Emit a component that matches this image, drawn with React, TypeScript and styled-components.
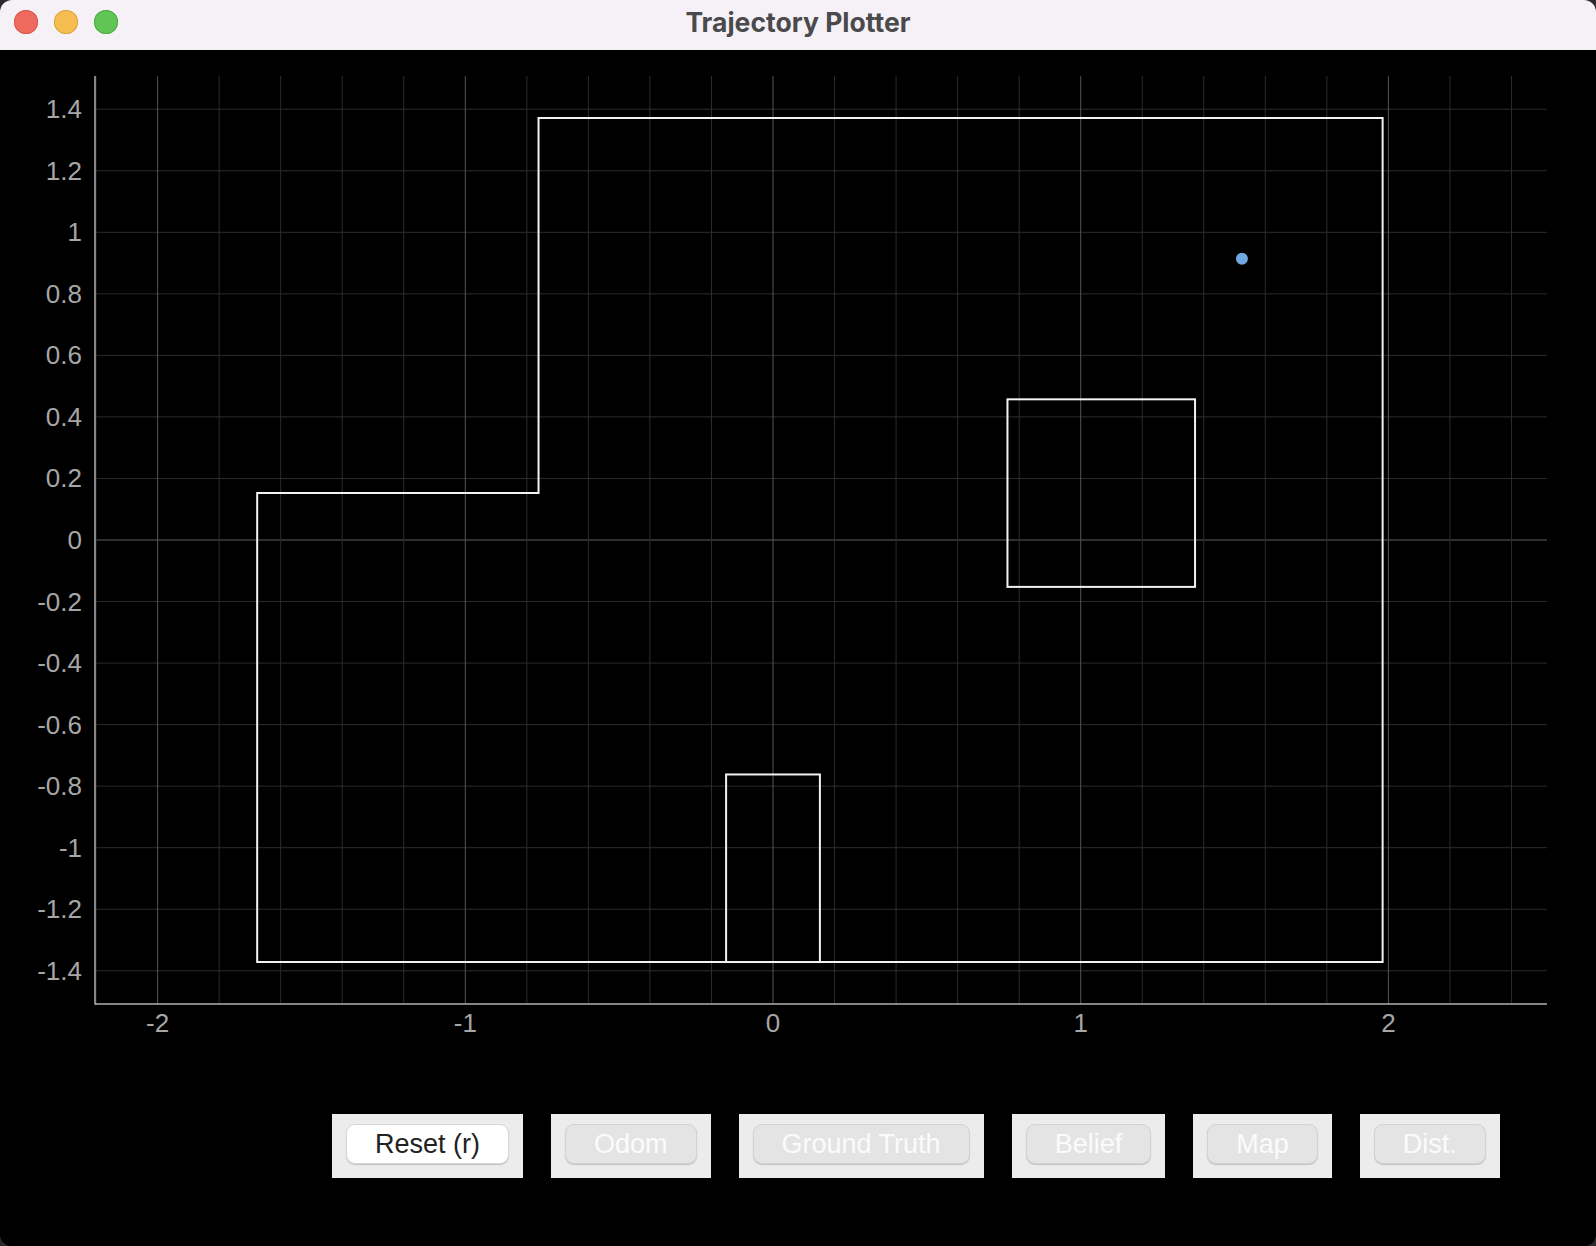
import React from "react";
import styled, { createGlobalStyle } from "styled-components";

const GlobalStyle = createGlobalStyle`
  html, body { margin: 0; padding: 0; background: #2b2b2b; }
  #root { width: 1596px; height: 1246px; }
`;

const Window = styled.div`
  width: 1596px;
  height: 1246px;
  display: flex;
  flex-direction: column;
  border-radius: 12px;
  overflow: hidden;
  background: #000;
`;

const TitleBar = styled.div`
  height: 50px;
  flex: 0 0 50px;
  box-sizing: border-box;
  padding-bottom: 7px;
  background: #f6f1f7;
  display: grid;
  grid-template-columns: 1fr auto 1fr;
  align-items: center;
`;

const Lights = styled.div`
  display: flex;
  gap: 16px;
  padding-left: 14px;
`;

const Light = styled.span<{ $fill: string; $edge: string }>`
  width: 24px;
  height: 24px;
  border-radius: 50%;
  background: ${(p) => p.$fill};
  box-shadow: inset 0 0 0 1px ${(p) => p.$edge};
`;

const Title = styled.div`
  font-family: Inter, "Noto Sans", sans-serif;
  font-weight: 700;
  font-size: 26.5px;
  line-height: 30px;
  color: #4a4a4c;
`;

const Content = styled.div`
  flex: 1;
  background: #000;
  display: flex;
  flex-direction: column;
`;

const Plot = styled.svg`
  display: block;
  width: 1596px;
  height: 1040px;
`;

const ButtonBar = styled.div`
  display: flex;
  gap: 28px;
  padding-left: 332px;
  margin-top: 24px;
`;

const Cell = styled.div`
  background: #ececec;
  padding: 10px 14px 14px;
  height: 64px;
  box-sizing: border-box;
`;

const Button = styled.button<{ $enabled?: boolean }>`
  height: 40px;
  box-sizing: border-box;
  padding: 0 28px;
  border-radius: 9px;
  font-family: "Liberation Sans", Arial, sans-serif;
  font-size: 27px;
  line-height: 38px;
  border: 1px solid ${(p) => (p.$enabled ? "#d6d6d6" : "#d2d2d2")};
  background: ${(p) => (p.$enabled ? "#ffffff" : "#e4e4e4")};
  color: ${(p) => (p.$enabled ? "#222222" : "#fbfbfb")};
  box-shadow: 0 1px 1px rgba(0, 0, 0, 0.18);
  cursor: default;
`;

const S = 307.7;
const X0 = 773;
const Y0 = 540 - 50; // svg starts at page y = 50
const X = (v: number) => X0 + v * S;
const Y = (v: number) => Y0 - v * S;

const LEFT = 95;
const RIGHT = 1547;
const TOP = 76 - 50;
const BOTTOM = 1004 - 50;

const round = (v: number) => Math.round(v * 10) / 10;
const fmt = (v: number) => {
  const r = round(v);
  if (Math.abs(r) < 1e-9) return "0";
  return String(r);
};

const xMinor: number[] = [];
for (let k = -11; k <= 12; k++) xMinor.push(k * 0.2);
const yMinor: number[] = [];
for (let k = -7; k <= 7; k++) yMinor.push(k * 0.2);
const xMajor = [-2, -1, 0, 1, 2];

const ft = 0.3048;
const outer = [
  [-2.5, 4.5],
  [6.5, 4.5],
  [6.5, -4.5],
  [-5.5, -4.5],
  [-5.5, 0.5],
  [-2.5, 0.5],
].map(([a, b]) => [a * ft, b * ft]);

const boxes = [
  [2.5, -0.5, 4.5, 1.5],
  [-0.5, -4.5, 0.5, -2.5],
].map((b) => b.map((v) => v * ft));

const buttons = [
  { label: "Reset (r)", enabled: true },
  { label: "Odom" },
  { label: "Ground Truth" },
  { label: "Belief" },
  { label: "Map" },
  { label: "Dist." },
];

const labelFont = "'Liberation Sans', Arial, sans-serif";

export default function App() {
  return (
    <>
      <GlobalStyle />
      <Window>
        <TitleBar>
          <Lights>
            <Light $fill="#ef6a5e" $edge="#d8574c" />
            <Light $fill="#f6be50" $edge="#dca23c" />
            <Light $fill="#61c555" $edge="#4faa43" />
          </Lights>
          <Title>Trajectory Plotter</Title>
          <div />
        </TitleBar>
        <Content>
          <Plot viewBox="0 0 1596 1040">
            {yMinor.map((v) => {
              const isMajor = Math.abs(v) < 1e-9;
              return (
                <line
                  key={"h" + v}
                  x1={LEFT}
                  x2={RIGHT}
                  y1={Y(v)}
                  y2={Y(v)}
                  stroke={isMajor ? "#5e5e5e" : "#2c2c2c"}
                  strokeWidth={1}
                />
              );
            })}
            {xMinor.map((v) => {
              const r = round(v);
              const isMajor = Math.abs(r - Math.round(r)) < 1e-9;
              const x = X(v);
              if (x <= LEFT + 1 || x > RIGHT) return null;
              return (
                <line
                  key={"v" + v}
                  x1={x}
                  x2={x}
                  y1={TOP}
                  y2={BOTTOM}
                  stroke={isMajor ? "#545454" : "#2c2c2c"}
                  strokeWidth={1}
                />
              );
            })}
            <line x1={LEFT} x2={LEFT} y1={TOP} y2={BOTTOM + 0.5} stroke="#b0b0b0" strokeWidth={1.5} />
            <line x1={LEFT} x2={RIGHT} y1={BOTTOM} y2={BOTTOM} stroke="#b0b0b0" strokeWidth={1.5} />

            {yMinor.map((v) => (
              <text
                key={"yl" + v}
                x={82}
                y={Y(v)}
                textAnchor="end"
                dominantBaseline="central"
                fill="#a6a6a6"
                fontSize={26}
                fontFamily={labelFont}
              >
                {fmt(v)}
              </text>
            ))}
            {xMajor.map((v) => (
              <text
                key={"xl" + v}
                x={X(v)}
                y={1023 - 50}
                textAnchor="middle"
                dominantBaseline="central"
                fill="#a6a6a6"
                fontSize={26}
                fontFamily={labelFont}
              >
                {fmt(v)}
              </text>
            ))}

            <polygon
              points={outer.map(([a, b]) => `${X(a)},${Y(b)}`).join(" ")}
              fill="none"
              stroke="#f2f2f2"
              strokeWidth={2}
            />
            {boxes.map(([x1, y1, x2, y2], i) => (
              <rect
                key={i}
                x={X(x1)}
                y={Y(y2)}
                width={X(x2) - X(x1)}
                height={Y(y1) - Y(y2)}
                fill="none"
                stroke="#f2f2f2"
                strokeWidth={2}
              />
            ))}
            <circle cx={X(5 * ft)} cy={Y(3 * ft)} r={6} fill="#70a8e2" />
          </Plot>
          <ButtonBar>
            {buttons.map((b) => (
              <Cell key={b.label}>
                <Button $enabled={b.enabled} disabled={!b.enabled}>
                  {b.label}
                </Button>
              </Cell>
            ))}
          </ButtonBar>
        </Content>
      </Window>
    </>
  );
}
